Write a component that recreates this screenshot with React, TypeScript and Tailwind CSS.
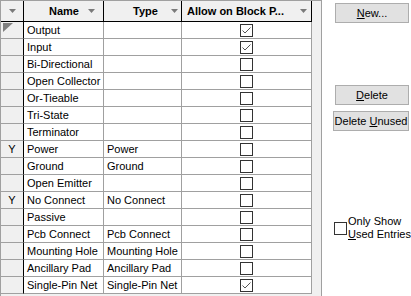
import React from "react";

type PinRow = {
  name: string;
  type: string;
  allow: boolean;
  used?: boolean;
};

const rows: PinRow[] = [
  { name: "Output", type: "", allow: true },
  { name: "Input", type: "", allow: true },
  { name: "Bi-Directional", type: "", allow: false },
  { name: "Open Collector", type: "", allow: false },
  { name: "Or-Tieable", type: "", allow: false },
  { name: "Tri-State", type: "", allow: false },
  { name: "Terminator", type: "", allow: false },
  { name: "Power", type: "Power", allow: false, used: true },
  { name: "Ground", type: "Ground", allow: false },
  { name: "Open Emitter", type: "", allow: false },
  { name: "No Connect", type: "No Connect", allow: false, used: true },
  { name: "Passive", type: "", allow: false },
  { name: "Pcb Connect", type: "Pcb Connect", allow: false },
  { name: "Mounting Hole", type: "Mounting Hole", allow: false },
  { name: "Ancillary Pad", type: "Ancillary Pad", allow: false },
  { name: "Single-Pin Net", type: "Single-Pin Net", allow: true },
];

// small grey dropdown arrow used in the column headers
function HeaderArrow() {
  return (
    <svg width="7" height="4" viewBox="0 0 7 4" className="shrink-0">
      <polygon points="0,0 7,0 3.5,4" fill="#7a7a7a" />
    </svg>
  );
}

function CheckBox({ checked }: { checked: boolean }) {
  return (
    <div className="w-[13px] h-[13px] border border-[#333333] bg-white flex items-center justify-center">
      {checked && (
        <svg width="11" height="11" viewBox="0 0 11 11">
          <polyline
            points="1.5,5.5 4,8 9.5,2.5"
            fill="none"
            stroke="#555555"
            strokeWidth="1"
          />
        </svg>
      )}
    </div>
  );
}

function WinButton({
  children,
  className,
}: {
  children: React.ReactNode;
  className: string;
}) {
  return (
    <div
      className={`h-[20px] border border-[#adadad] bg-[#e1e1e1] flex items-center justify-center text-[11px] text-black ${className}`}
    >
      {children}
    </div>
  );
}

export default function App() {
  return (
    <div
      className="w-[411px] h-[296px] bg-white flex overflow-hidden text-[11px] text-black"
      style={{ fontFamily: '"Liberation Sans", Arial, sans-serif' }}
    >
      {/* grid */}
      <div className="w-[322px] h-[296px] border-l border-t border-r border-[#a0a0a0] bg-[#f0f0f0] flex flex-col shrink-0">
        {/* header */}
        <div className="flex h-[21px] shrink-0">
          <div className="w-[23px] h-full border-r border-b border-black bg-[#f0f0f0] flex items-center justify-center">
            <HeaderArrow />
          </div>
          <div className="w-[80px] h-full border-r border-b border-black bg-[#f0f0f0] flex items-center pl-[16px] pr-[8px]">
            <span className="font-bold flex-1 text-center">Name</span>
            <HeaderArrow />
          </div>
          <div className="w-[78px] h-full border-r border-b border-black bg-[#f0f0f0] flex items-center pl-[16px] pr-[3px]">
            <span className="font-bold flex-1 text-center">Type</span>
            <HeaderArrow />
          </div>
          <div className="w-[130px] h-full border-r border-b border-black bg-[#f0f0f0] flex items-center pl-[5px] pr-[4px]">
            <span className="font-bold flex-1 whitespace-nowrap">Allow on Block P...</span>
            <HeaderArrow />
          </div>
        </div>

        {/* body rows */}
        {rows.map((row, i) => (
          <div key={row.name} className="flex h-[17px] shrink-0">
            <div className="relative w-[23px] h-full border-r border-b border-r-black border-b-[#a0a0a0] bg-[#f0f0f0] flex items-center justify-center">
              {i === 0 && (
                <svg width="10" height="9" viewBox="0 0 10 9" className="absolute left-[2px] top-[1px]">
                  <polygon points="0,0 10,0 0,9" fill="#808080" />
                </svg>
              )}
              {row.used && <span>Y</span>}
            </div>
            <div className="w-[80px] h-full border-r border-b border-[#a0a0a0] bg-white flex items-center pl-[3px] whitespace-nowrap overflow-hidden">
              {row.name}
            </div>
            <div className="w-[78px] h-full border-r border-b border-[#a0a0a0] bg-white flex items-center pl-[3px] whitespace-nowrap overflow-hidden">
              {row.type}
            </div>
            <div className="w-[130px] h-full border-r border-b border-[#a0a0a0] bg-white flex items-center justify-center">
              <CheckBox checked={row.allow} />
            </div>
          </div>
        ))}
      </div>

      {/* buttons on the right */}
      <div className="flex-1 flex flex-col">
        <WinButton className="mt-[3px] ml-[13px] w-[74px]">
          <span>
            <span className="underline">N</span>ew...
          </span>
        </WinButton>
        <WinButton className="mt-[62px] ml-[13px] w-[74px]">
          <span>
            <span className="underline">D</span>elete
          </span>
        </WinButton>
        <WinButton className="mt-[6px] ml-[11px] w-[76px]">
          <span>
            Delete <span className="underline">U</span>nused
          </span>
        </WinButton>
        <div className="mt-[84px] ml-[12px] flex items-center gap-[1px]">
          <CheckBox checked={false} />
          <div className="leading-[13px]">
            <div>Only Show</div>
            <div>
              <span className="underline">U</span>sed Entries
            </div>
          </div>
        </div>
      </div>
    </div>
  );
}
